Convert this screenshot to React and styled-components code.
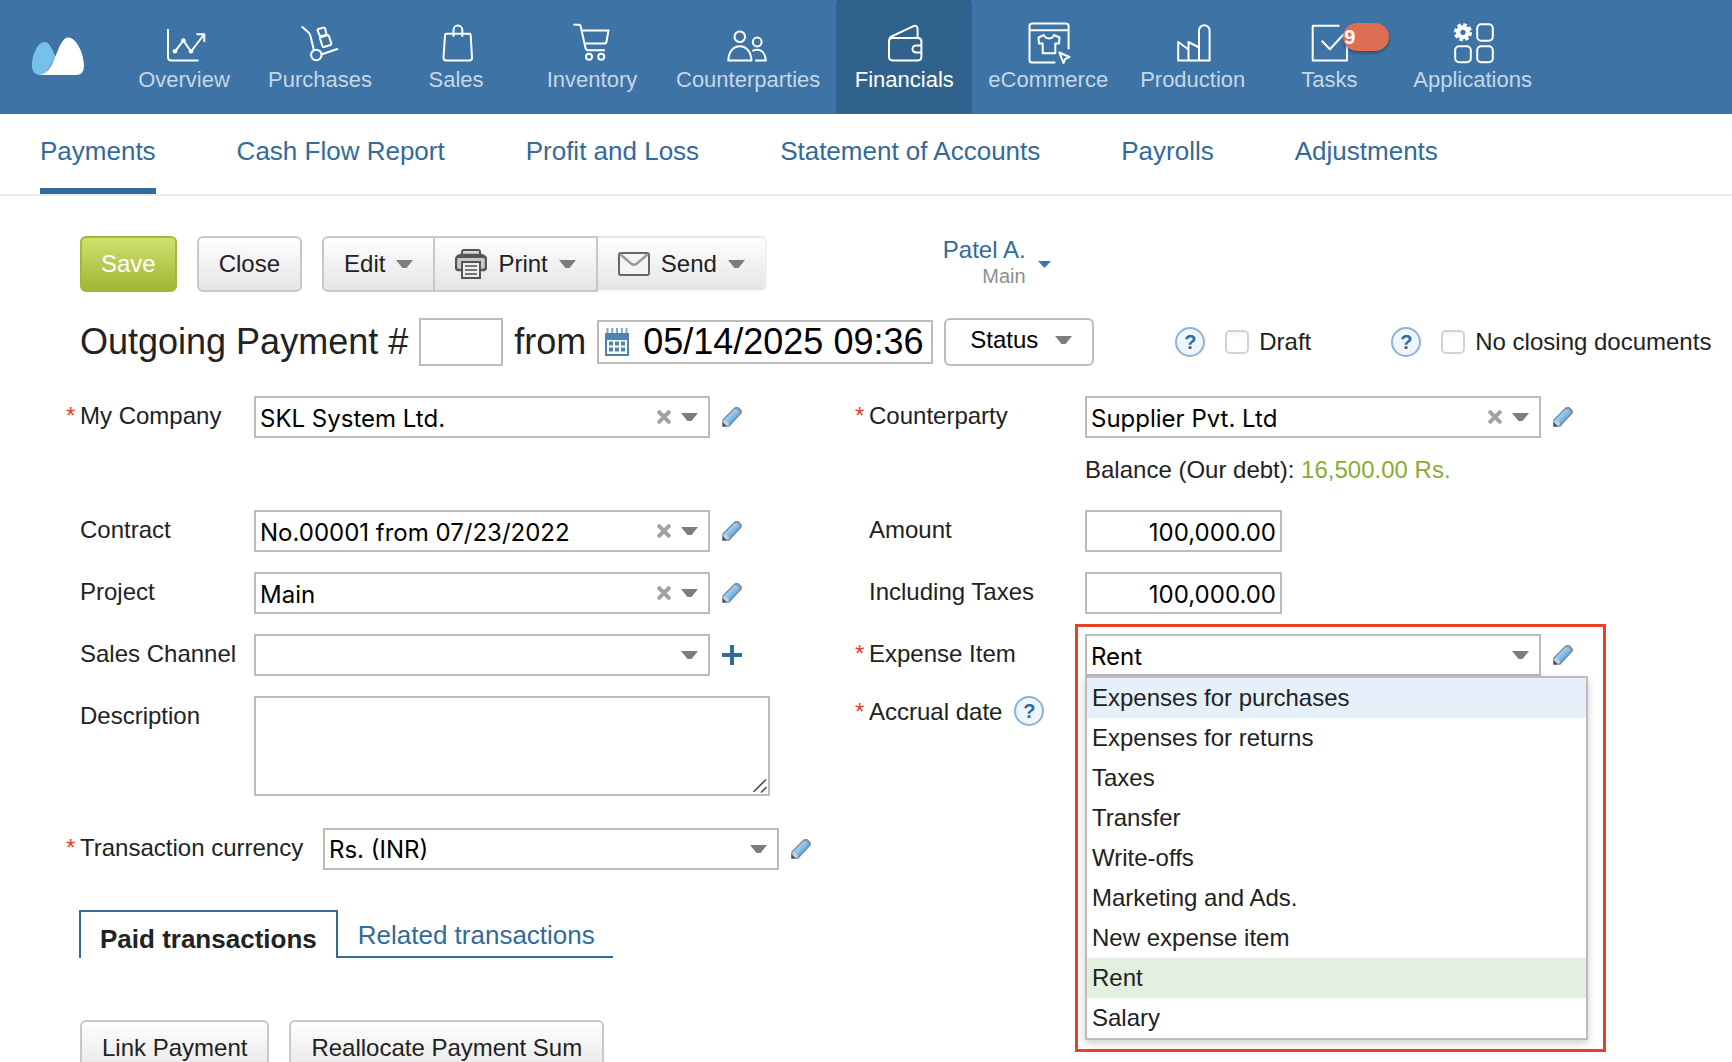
import React, { useState } from "react";
import styled, { createGlobalStyle, css } from "styled-components";

const sans = `"Liberation Sans", Arial, sans-serif`;
const fieldFont = `Inter, "Liberation Sans", sans-serif`;
const c = {
  header: "#3d73a5",
  headerActive: "#30628b",
  link: "#326a99",
  text: "#222222",
  border: "#bcbcbc",
  buttonBorder: "#c8c8c8",
  caret: "#7d7d7d",
  muted: "#8f8f8f",
  green: "#8bab35",
  red: "#e8402a",
};

const GlobalStyle = createGlobalStyle`
  *, *::before, *::after { box-sizing: border-box; }
  body { margin: 0; background: #fff; color: ${c.text}; font: 24px/28px ${sans}; }
  h1, ul { margin: 0; padding: 0; }
  button, input, select, textarea { font: inherit; color: inherit; margin: 0; }
  button { cursor: pointer; }
  a { text-decoration: none; }
`;

const Page = styled.div`
  height: 100vh;
  overflow: hidden;
`;

/* ---------- header ---------- */

const Header = styled.header`
  display: flex;
  height: 114px;
  background: ${c.header};
`;

const LogoLink = styled.a`
  flex: none;
  width: 116px;
  padding: 37px 0 0 32px;
`;

const MainNav = styled.nav`
  display: flex;
`;

const NavLink = styled.a`
  display: flex;
  flex-direction: column;
  align-items: center;
  gap: 3px;
  min-width: 136px;
  padding: 20px 16px 0;
  font-size: 22px;
  line-height: 26px;
  border-radius: 4px 4px 0 0;
  color: ${(p) => (p.$active ? "#fff" : "#c6d7e6")};
  background: ${(p) => (p.$active ? c.headerActive : "transparent")};
`;

const NavIconBox = styled.span`
  position: relative;
  width: 44px;
  height: 44px;
  svg {
    display: block;
    fill: none;
    stroke: #fff;
    stroke-width: 2;
    stroke-linejoin: round;
    overflow: visible;
  }
`;

const Badge = styled.span`
  position: absolute;
  top: 3px;
  left: 36px;
  width: 46px;
  height: 28px;
  padding-left: 1px;
  border-radius: 14px;
  background: #dd6e54;
  box-shadow: 0 2px 3px rgba(0, 0, 0, 0.3);
  color: #fff;
  font-size: 20px;
  font-weight: bold;
  line-height: 28px;
`;

const SubNav = styled.nav`
  display: flex;
  gap: 81px;
  height: 82px;
  padding: 0 40px;
  border-bottom: 2px solid #ebebeb;
`;

const SubLink = styled.a`
  padding-top: 22px;
  font-size: 26px;
  line-height: 30px;
  white-space: nowrap;
  color: ${c.link};
  border-bottom: 6px solid ${(p) => (p.$active ? c.link : "transparent")};
`;

/* ---------- content ---------- */

const Content = styled.main`
  padding: 40px 16px 0 66px;
`;

const Toolbar = styled.div`
  display: flex;
  gap: 20px;
  padding-left: 14px;
`;

const Button = styled.button`
  display: flex;
  align-items: center;
  height: 56px;
  padding: 0 20px;
  border: 2px solid ${c.buttonBorder};
  border-radius: 6px;
  background: linear-gradient(#ffffff, #e5e5e5);
  white-space: nowrap;
  ${(p) =>
    p.$primary &&
    css`
      padding: 0 19px;
      color: #fff;
      border-color: #a3b838;
      background: linear-gradient(#cfe16c, #a2b536);
    `}
`;

const ButtonGroup = styled.div`
  display: flex;
  ${Button} {
    gap: 11px;
  }
  ${Button}:first-child {
    border-radius: 6px 0 0 6px;
  }
  ${Button}:nth-child(2) {
    border-left: 0;
    border-radius: 0;
  }
  ${Button}:last-child {
    border-color: #e6e6e6 #f0f0f0 #fafafa transparent;
    border-left: 0;
    border-radius: 0 6px 6px 0;
  }
`;

const UserMenu = styled.button`
  display: flex;
  align-items: center;
  gap: 12px;
  margin-left: 156px;
  padding: 0;
  border: 0;
  background: none;
  text-align: right;
  color: ${c.link};
`;

const UserName = styled.span`
  padding-bottom: 4px;
`;

const UserRole = styled.small`
  display: block;
  font-size: 20px;
  line-height: 24px;
  color: ${c.muted};
`;

const TitleRow = styled.div`
  display: flex;
  align-items: center;
  gap: 11px;
  margin-top: 26px;
  padding-left: 14px;
  font-size: 36px;
  line-height: 44px;
`;

const Title = styled.h1`
  font: inherit;
  white-space: nowrap;
`;

const NumberInput = styled.input`
  width: 84px;
  height: 48px;
  border: 2px solid ${c.border};
`;

const DateBox = styled.label`
  display: flex;
  align-items: center;
  gap: 14px;
  width: 336px;
  height: 44px;
  padding: 0 4px 0 6px;
  border: 2px solid ${c.border};
  input {
    flex: 1;
    min-width: 0;
    height: 40px;
    padding: 0;
    border: 0;
    color: #000;
    outline: none;
  }
`;

const StatusButton = styled(Button)`
  gap: 17px;
  height: 48px;
  padding: 0 20px 4px 24px;
  border-color: ${c.border};
  background: #fff;
  color: #000;
  font-size: 24px;
  line-height: 28px;
`;

const Options = styled.div`
  display: flex;
  gap: 80px;
  margin-left: 70px;
  font-size: 24px;
  line-height: 28px;
`;

const Option = styled.div`
  display: flex;
  align-items: center;
  gap: 20px;
  label {
    display: flex;
    align-items: center;
    gap: 10px;
    white-space: nowrap;
  }
`;

const CheckBox = styled.input`
  appearance: none;
  width: 24px;
  height: 24px;
  border: 2px solid #d2d2d2;
  border-radius: 5px;
  background: linear-gradient(#f4f4f4, #fff 30%);
`;

const Help = styled.button`
  flex: none;
  width: 30px;
  height: 30px;
  padding: 0;
  border: 2px solid #8cb3d5;
  border-radius: 50%;
  background: #eef6fd;
  color: ${c.link};
  font: bold 20px/26px ${sans};
`;

const Form = styled.form`
  display: grid;
  grid-template-columns: 789fr 861fr;
  margin-top: 30px;
`;

const Column = styled.div`
  display: flex;
  flex-direction: column;
  gap: 20px;
`;

const Row = styled.div`
  display: grid;
  grid-template-columns: 14px ${(p) => p.$label}px 1fr;
  align-items: start;
  min-height: ${(p) => (p.$tall ? 94 : 42)}px;
  margin-top: ${(p) => p.$before || 0}px;
`;

const Star = styled.span`
  padding-top: 6px;
  color: ${c.red};
`;

const Label = styled.label`
  padding-top: 6px;
  white-space: nowrap;
`;

const LabelGroup = styled.div`
  display: flex;
  align-items: flex-end;
  gap: 12px;
`;

const Control = styled.div`
  position: relative;
  display: flex;
  align-items: center;
  gap: 12px;
`;

const ComboBox = styled.div`
  position: relative;
  display: flex;
  align-items: center;
  gap: 10px;
  width: 456px;
  height: 42px;
  padding: 0 10px 0 4px;
  border: 2px solid ${c.border};
  background: #fff;
  input,
  select {
    flex: 1;
    min-width: 0;
    height: 38px;
    padding: 2px 0 0;
    border: 0;
    outline: none;
    appearance: none;
    background: none;
    color: #000;
    font: 24px/36px ${fieldFont};
  }
`;

const IconButton = styled.button`
  display: flex;
  padding: 0;
  border: 0;
  background: none;
`;

const MoneyInput = styled.input`
  width: 197px;
  height: 42px;
  padding: 2px 4px 0;
  border: 2px solid ${c.border};
  color: #000;
  font: 24px/36px ${fieldFont};
  text-align: right;
`;

const TextAreaBox = styled.div`
  position: relative;
  width: fit-content;
  svg {
    position: absolute;
    right: 3px;
    bottom: 3px;
    pointer-events: none;
  }
`;

const TextArea = styled.textarea`
  display: block;
  width: 516px;
  height: 100px;
  border: 2px solid ${c.border};
  resize: both;
  &::-webkit-resizer {
    display: none;
  }
`;

const Balance = styled.p`
  margin: 18px 0 0;
`;

const Amount = styled.span`
  color: ${c.green};
`;

const ListBox = styled.ul`
  position: absolute;
  top: 42px;
  left: 0;
  z-index: 2;
  width: 503px;
  border: 2px solid ${c.border};
  background: #fff;
  box-shadow: 0 3px 8px rgba(0, 0, 0, 0.2);
  list-style: none;
`;

const ListItem = styled.li`
  padding: 6px 5px;
  color: ${c.text};
  background: ${(p) => (p.$hover ? "#e6f0fa" : p.$selected ? "#e2f0df" : "#fff")};
`;

const Highlight = styled.div`
  position: absolute;
  top: -10px;
  left: -10px;
  z-index: 1;
  width: 531px;
  height: 428px;
  border: 3px solid ${c.red};
  pointer-events: none;
`;

const Tabs = styled.div`
  display: flex;
  margin: 40px 0 62px;
  padding-left: 13px;
`;

const Tab = styled.button`
  display: flex;
  align-items: flex-start;
  height: 48px;
  padding: ${(p) => (p.$active ? "12px 19px 0" : "10px 18px 0 20px")};
  border: 0 solid ${c.link};
  border-width: ${(p) => (p.$active ? "2px 2px 0" : "0 0 2px")};
  background: none;
  color: ${(p) => (p.$active ? c.text : c.link)};
  font-size: 26px;
  font-weight: ${(p) => (p.$active ? "bold" : "normal")};
  line-height: 30px;
`;

/* ---------- icons ---------- */

const Caret = ({ color = c.caret }) => (
  <svg width="17" height="9" viewBox="0 0 17 9" aria-hidden="true">
    <path d="M0 0H17L10.5 8H6.5Z" fill={color} />
  </svg>
);

const Cross = () => (
  <svg width="14" height="14" viewBox="0 0 14 14" aria-hidden="true">
    <path d="M1 1L13 13M13 1L1 13" stroke="#a2a2a2" strokeWidth="4" />
  </svg>
);

const Pencil = () => (
  <svg width="20" height="20" viewBox="0 0 20 20" aria-hidden="true">
    <defs>
      <linearGradient id="pencil" x1="0.3" y1="0.3" x2="0.7" y2="0.7">
        <stop offset="0" stopColor="#b4daf7" />
        <stop offset="1" stopColor="#5a9fd6" />
      </linearGradient>
    </defs>
    <path d="M1 13L13 1H16L19 4V6L7 19H1Z" fill="url(#pencil)" stroke="#6f8ca5" strokeWidth="1.4" />
    <path d="M13 1.2H16L18.8 4V6" fill="none" stroke="#8a8f94" strokeWidth="2" />
    <path d="M1.5 13.5L3.500 13L7 16.500L6.500 18.500H1.500Z" fill="#c3d3df" />
    <path d="M0.5 15L5 19.5H0.5Z" fill="#45545f" />
  </svg>
);

const Plus = () => (
  <svg width="20" height="20" viewBox="0 0 20 20" aria-hidden="true">
    <path d="M10 0V20M0 10H20" stroke={c.link} strokeWidth="4" />
  </svg>
);

const Grip = () => (
  <svg width="14" height="14" viewBox="0 0 14 14" aria-hidden="true">
    <path d="M0.500 13L13 0.500M8 13.500L13.500 8" stroke="#555" strokeWidth="1.600" />
  </svg>
);

const Printer = () => (
  <svg width="32" height="30" viewBox="0 0 32 30" aria-hidden="true">
    <path d="M7 5V3Q7 1 9 1H23Q25 1 25 3V5" fill="#d8d8d8" stroke="#555" strokeWidth="2" />
    <path d="M6 6H26Q31 7 31 11V18Q31 21 28 21H4Q1 21 1 18V11Q1 7 6 6Z" fill="#c9c9c9" stroke="#555" strokeWidth="2.400" />
    <path d="M5 5H27L30 9H2Z" fill="#555" />
    <rect x="7" y="13" width="18" height="16" fill="#efefef" stroke="#555" strokeWidth="2" />
    <path d="M10 17H22M10 21H22M10 25H22" stroke="#777" strokeWidth="2" />
  </svg>
);

const Envelope = () => (
  <svg width="32" height="24" viewBox="0 0 32 24" aria-hidden="true">
    <rect x="1" y="1" width="30" height="22" rx="2" fill="#f4f4f4" stroke="#666" strokeWidth="2" />
    <path d="M2 2L13 11.5Q16 14 19 11.5L30 2" fill="none" stroke="#999" strokeWidth="2.4" />
  </svg>
);

const Calendar = () => (
  <svg width="24" height="28" viewBox="0 0 24 28" aria-hidden="true">
    <path d="M2.5 0V6M7.2 0V6M12 0V6M16.8 0V6M21.5 0V6" stroke="#7fa9cb" strokeWidth="2" />
    <rect x="1" y="6" width="22" height="21" fill="#fff" stroke="#4c84b2" strokeWidth="2" />
    <rect x="0" y="5" width="24" height="7" fill="#4c84b2" />
    <path d="M4 15.5H20M4 21.5H20" stroke="#4c84b2" strokeWidth="4" strokeDasharray="4 2" />
  </svg>
);

const Logo = () => (
  <svg width="52" height="38" viewBox="0 0 52 38" aria-hidden="true">
    <path d="M8 38Q0 37.500 0 29C0 17 6 5 12.400 5C17.500 5 20 12 23.500 19.500L14 36L9 38Z" fill="#78c0ec" />
    <path d="M8 38C17 36.500 20 27 24 18C28 8 31 0.500 36.400 0.500C44 0.500 52 16 52 29Q52 38 44 38Z" fill="#fff" />
  </svg>
);

const icons = {
  overview: (
    <>
      <path d="M6 9V37Q6 40.500 9.500 40.500H36.500M13 31.300L21.400 20.500L29 31.500L42 14.500M34.500 14.200H42.300V22" />
      <g fill="#fff" stroke="none">
        <circle cx="13" cy="31.300" r="2.300" />
        <circle cx="21.400" cy="20.500" r="2.300" />
        <circle cx="29" cy="31.300" r="2.300" />
      </g>
    </>
  ),
  purchases: (
    <>
      <path d="M3.800 6.500L10 12Q12 13.500 12.500 16L15.800 30M23.300 34.500L40 28.800" />
      <circle cx="18.300" cy="35" r="5.200" />
      <path d="M20.500 9L25.500 7.600Q26.700 7.300 27 8.400L28.700 14.500L22.200 16.500L19.600 10.500Q19.300 9.400 20.500 9ZM22.500 17.200L29.500 15.300Q30.700 15 31 16.200L33.300 23.500Q33.600 24.700 32.500 25L26 27Q24.900 27.300 24.500 26.200L22 18.500Q21.700 17.500 22.500 17.200Z" />
    </>
  ),
  sales: (
    <path d="M12.500 13.700H35.500Q36.600 13.700 36.700 15L38 37.500Q38 40.400 35.500 40.400H12Q9.500 40.400 9.500 37.500L11 15Q11.100 13.700 12.500 13.700ZM19.500 16.700V10A4.400 4.400 0 0 1 28.300 10V16.700" />
  ),
  inventory: (
    <>
      <path d="M3.500 4.700H9Q10.300 4.700 10.600 6L15.500 28Q16 30.300 18.300 30.300H35M12 10.500H38.500L36.500 21.500Q36.200 23.600 34 23.600H14.700" />
      <circle cx="19" cy="36.700" r="3" />
      <circle cx="31.200" cy="36.700" r="3" />
    </>
  ),
  counterparties: (
    <>
      <ellipse cx="13.800" cy="16.700" rx="5.300" ry="5.300" />
      <circle cx="31.200" cy="22" r="4.400" />
      <path d="M2.300 40.400C2.800 32 7 26.300 13.800 26.300C20.500 26.300 25 32 25.500 40.400ZM26.300 31Q28 29.700 31 29.700C36 29.700 39.300 34 39.800 40.400H29" />
    </>
  ),
  financials: (
    <>
      <path d="M39.400 25.500V21.500Q39.400 18 36 18H10.500Q7 18 7 21.500V36.500Q7 40.400 10.500 40.400H36Q39.400 40.400 39.400 36.500V32.500M39.400 25.500H34A3.500 3.500 0 0 0 34 32.500H39.400Z" />
      <path d="M7.500 19Q7.500 17.500 9.500 16.500L31 6.300Q35.600 4.500 35.600 9.500V18" />
    </>
  ),
  ecommerce: (
    <>
      <path d="M42.600 29.300V6Q42.600 3.500 40 3.500H6Q3.500 3.500 3.500 6V40Q3.500 42.600 6 42.600H29.300M3.500 10.300H42.600" />
      <path d="M18 15C19.500 19.500 26.500 19.500 28 15L33.500 17.500L33 23.500H29.300V33.300H16.700V23.500H13L12.500 17.500Z" />
      <path d="M33.300 32.500L43.500 37L39.300 38.800L37.500 43Z" />
    </>
  ),
  production: (
    <path d="M7.200 40.400V22L17.500 29.500V22L28 27.500V40.400M17.500 29V40.400M28 28V10.500A5.300 5.300 0 0 1 38.600 10.500V40.400H6.200" />
  ),
  tasks: <path d="M32.500 5.700H5.700V40.400H40V26M14.800 20.700L22.900 29.300L37 14" />,
  applications: (
    <>
      <rect x="26.200" y="4.200" width="15.600" height="16.500" rx="4" />
      <rect x="4.200" y="26.200" width="15.600" height="16" rx="4" />
      <rect x="26.200" y="26.200" width="15.600" height="16" rx="4" />
      <circle cx="12" cy="12.300" r="4.800" strokeWidth="4.400" />
      <circle cx="12" cy="12.300" r="7.600" strokeWidth="3" strokeDasharray="3.600 2.369" />
    </>
  ),
};

/* ---------- data ---------- */

const navItems = [
  ["overview", "Overview"],
  ["purchases", "Purchases"],
  ["sales", "Sales"],
  ["inventory", "Inventory"],
  ["counterparties", "Counterparties"],
  ["financials", "Financials"],
  ["ecommerce", "eCommerce"],
  ["production", "Production"],
  ["tasks", "Tasks"],
  ["applications", "Applications"],
];

const subItems = [
  "Payments",
  "Cash Flow Report",
  "Profit and Loss",
  "Statement of Accounts",
  "Payrolls",
  "Adjustments",
];

const expenseItems = [
  "Expenses for purchases",
  "Expenses for returns",
  "Taxes",
  "Transfer",
  "Write-offs",
  "Marketing and Ads.",
  "New expense item",
  "Rent",
  "Salary",
];

/* ---------- composed parts ---------- */

function Field({ id, label, required, labelWidth, before, tall, help, children }) {
  return (
    <Row $label={labelWidth} $before={before} $tall={tall}>
      <Star aria-hidden="true">{required ? "*" : ""}</Star>
      <LabelGroup>
        <Label htmlFor={id}>{label}</Label>
        {help && (
          <Help type="button" aria-label={`About ${label}`}>
            ?
          </Help>
        )}
      </LabelGroup>
      <div>{children}</div>
    </Row>
  );
}

function Combo({ id, value, clearable, action = "edit", children }) {
  const [text, setText] = useState(value);
  return (
    <Control>
      <ComboBox>
        <input
          id={id}
          role="combobox"
          aria-expanded={Boolean(children)}
          aria-controls={`${id}-list`}
          value={text}
          onChange={(e) => setText(e.target.value)}
        />
        {clearable && (
          <IconButton type="button" aria-label="Clear" onClick={() => setText("")}>
            <Cross />
          </IconButton>
        )}
        <IconButton type="button" aria-label="Open list">
          <Caret />
        </IconButton>
      </ComboBox>
      <IconButton type="button" aria-label={action === "add" ? "Add" : "Edit"}>
        {action === "add" ? <Plus /> : <Pencil />}
      </IconButton>
      {children}
    </Control>
  );
}

function Choice({ id, options, action = "edit" }) {
  return (
    <Control>
      <ComboBox>
        <select id={id}>
          {options.map((o) => (
            <option key={o}>{o}</option>
          ))}
        </select>
        <Caret />
      </ComboBox>
      <IconButton type="button" aria-label={action === "add" ? "Add" : "Edit"}>
        {action === "add" ? <Plus /> : <Pencil />}
      </IconButton>
    </Control>
  );
}

function FlagOption({ id, label }) {
  return (
    <Option>
      <Help type="button" aria-label={`About ${label}`}>
        ?
      </Help>
      <label htmlFor={id}>
        <CheckBox id={id} type="checkbox" />
        {label}
      </label>
    </Option>
  );
}

export default function App() {
  return (
    <Page>
      <GlobalStyle />
      <Header>
        <LogoLink href="#home" aria-label="Home">
          <Logo />
        </LogoLink>
        <MainNav>
          {navItems.map(([key, name]) => (
            <NavLink key={key} href={`#${key}`} $active={key === "financials"}>
              <NavIconBox>
                <svg width="44" height="44" viewBox="0 0 44 44" aria-hidden="true">
                  {icons[key]}
                </svg>
                {key === "tasks" && <Badge>9</Badge>}
              </NavIconBox>
              {name}
            </NavLink>
          ))}
        </MainNav>
      </Header>
      <SubNav>
        {subItems.map((name, i) => (
          <SubLink key={name} href="#section" $active={i === 0}>
            {name}
          </SubLink>
        ))}
      </SubNav>

      <Content>
        <Toolbar>
          <Button $primary>Save</Button>
          <Button>Close</Button>
          <ButtonGroup>
            <Button>
              Edit <Caret />
            </Button>
            <Button>
              <Printer /> Print <Caret />
            </Button>
            <Button>
              <Envelope /> Send <Caret />
            </Button>
          </ButtonGroup>
          <UserMenu>
            <UserName>
              Patel A.
              <UserRole>Main</UserRole>
            </UserName>
            <svg width="13" height="7" viewBox="0 0 13 7" aria-hidden="true">
              <path d="M0 0H13L6.500 7Z" fill="#3d78b0" />
            </svg>
          </UserMenu>
        </Toolbar>

        <TitleRow>
          <Title>Outgoing Payment #</Title>
          <NumberInput aria-label="Payment number" />
          <span>from</span>
          <DateBox>
            <Calendar />
            <input aria-label="Payment date" defaultValue="05/14/2025 09:36" />
          </DateBox>
          <StatusButton>
            Status <Caret />
          </StatusButton>
          <Options>
            <FlagOption id="draft" label="Draft" />
            <FlagOption id="closing" label="No closing documents" />
          </Options>
        </TitleRow>

        <Form>
          <Column>
            <Field id="company" label="My Company" required labelWidth={174} tall>
              <Combo id="company" value="SKL System Ltd." clearable />
            </Field>
            <Field id="contract" label="Contract" labelWidth={174}>
              <Combo id="contract" value="No.00001 from 07/23/2022" clearable />
            </Field>
            <Field id="project" label="Project" labelWidth={174}>
              <Combo id="project" value="Main" clearable />
            </Field>
            <Field id="channel" label="Sales Channel" labelWidth={174}>
              <Choice id="channel" options={[""]} action="add" />
            </Field>
            <Field id="description" label="Description" labelWidth={174}>
              <TextAreaBox>
                <TextArea id="description" />
                <Grip />
              </TextAreaBox>
            </Field>
            <Field id="currency" label="Transaction currency" required labelWidth={243} before={12}>
              <Choice id="currency" options={["Rs. (INR)"]} />
            </Field>
          </Column>
          <Column>
            <Field id="counterparty" label="Counterparty" required labelWidth={216} tall>
              <Combo id="counterparty" value="Supplier Pvt. Ltd" clearable />
              <Balance>
                Balance (Our debt): <Amount>16,500.00 Rs.</Amount>
              </Balance>
            </Field>
            <Field id="amount" label="Amount" labelWidth={216}>
              <MoneyInput id="amount" defaultValue="100,000.00" />
            </Field>
            <Field id="taxes" label="Including Taxes" labelWidth={216}>
              <MoneyInput id="taxes" defaultValue="100,000.00" />
            </Field>
            <Field id="expense" label="Expense Item" required labelWidth={216}>
              <Combo id="expense" value="Rent">
                <ListBox id="expense-list" role="listbox" aria-label="Expense Item">
                  {expenseItems.map((item, i) => (
                    <ListItem
                      key={item}
                      role="option"
                      aria-selected={item === "Rent"}
                      $hover={i === 0}
                      $selected={item === "Rent"}
                    >
                      {item}
                    </ListItem>
                  ))}
                </ListBox>
                <Highlight />
              </Combo>
            </Field>
            <Field id="accrual" label="Accrual date" required labelWidth={216} before={-4} help>
              {null}
            </Field>
          </Column>
        </Form>

        <Tabs role="tablist">
          <Tab role="tab" aria-selected="true" $active>
            Paid transactions
          </Tab>
          <Tab role="tab" aria-selected="false">
            Related transactions
          </Tab>
        </Tabs>

        <Toolbar>
          <Button>Link Payment</Button>
          <Button>Reallocate Payment Sum</Button>
        </Toolbar>
      </Content>
    </Page>
  );
}
